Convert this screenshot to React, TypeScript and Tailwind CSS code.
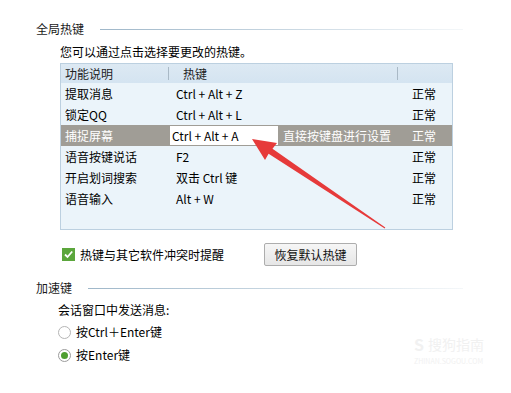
import React from "react";

const rows = [
  { name: "提取消息", key: "Ctrl + Alt + Z" },
  { name: "锁定QQ", key: "Ctrl + Alt + L" },
  { name: "捕捉屏幕", key: "Ctrl + Alt + A", selected: true },
  { name: "语音按键说话", key: "F2" },
  { name: "开启划词搜索", key: "双击 Ctrl 键" },
  { name: "语音输入", key: "Alt + W" },
];

export default function App() {
  return (
    <div
      className="relative w-[511px] h-[393px] bg-white overflow-hidden text-black"
      style={{ fontFamily: '"Noto Sans CJK SC", "Noto Sans", sans-serif' }}
    >
      <div className="pl-[36px] pt-[21px]">
        <div className="flex items-center h-4">
          <span className="text-[12px] leading-4 text-[#1a1a1a]">全局热键</span>
          <div className="flex-1 h-px ml-[16px] mr-[48px] bg-gradient-to-r from-[#9fb7c9] via-[#c7d6e1] to-[#f4f7f9]" />
        </div>
        <div className="pl-[24px] mt-[7px] text-[12px] leading-4">您可以通过点击选择要更改的热键。</div>
        <div className="ml-[24px] mt-[3px] w-[393px] h-[167px] border border-[#bcd0e0] bg-[#ebf4fa]">
          <div className="flex h-[19px] items-center bg-gradient-to-b from-[#dde9f3] to-[#d4e4f1] text-[12px] text-[#222]">
            <div className="w-[107px] pl-[4px] leading-4">功能说明</div>
            <div className="w-px h-[13px] bg-[#a9b9c6]" />
            <div className="w-[228px] pl-[14px] leading-4">热键</div>
            <div className="w-px h-[13px] bg-[#a9b9c6]" />
          </div>
          {rows.map((r) =>
            r.selected ? (
              <div key={r.name} className="flex h-[21px] items-center bg-[#a09d96] text-[12px] text-white">
                <div className="w-[109px] pl-[4px] leading-4">{r.name}</div>
                <div className="w-[108px] h-[19px] bg-white text-black pl-[2px] leading-[19px]">{r.key}</div>
                <div className="w-[134px] pl-[5px] leading-4">直接按键盘进行设置</div>
                <div className="leading-4">正常</div>
              </div>
            ) : (
              <div key={r.name} className="flex h-[21px] items-center text-[12px] text-black">
                <div className="w-[111px] pl-[4px] leading-4">{r.name}</div>
                <div className="w-[240px] pl-[4px] leading-4">{r.key}</div>
                <div className="leading-4">正常</div>
              </div>
            )
          )}
        </div>
        <div className="flex items-center ml-[26px] mt-[13px] h-[23px]">
          <div className="w-[13px] h-[13px] bg-[#5ba63c] flex items-center justify-center">
            <svg width="11" height="11" viewBox="0 0 11 11">
              <path d="M2 5.5 L4.5 8 L9.2 2.5" stroke="white" strokeWidth="1.8" fill="none" />
            </svg>
          </div>
          <span className="ml-[5px] text-[12px] leading-4">热键与其它软件冲突时提醒</span>
          <button className="ml-[40px] w-[93px] h-[23px] border border-[#adadad] rounded-[2px] bg-gradient-to-b from-[#f6f6f6] to-[#e6e6e6] text-[12px] leading-4 text-[#111]">
            恢复默认热键
          </button>
        </div>
        <div className="mt-[14px] flex items-center h-4">
          <span className="text-[12px] leading-4 text-[#1a1a1a]">加速键</span>
          <div className="flex-1 h-px ml-[16px] mr-[48px] bg-gradient-to-r from-[#9fb7c9] via-[#c7d6e1] to-[#f4f7f9]" />
        </div>
        <div className="pl-[22px] mt-[6px] text-[12px] leading-4">会话窗口中发送消息:</div>
        <div className="pl-[22px] mt-[5px] flex items-center h-[18px]">
          <div className="w-[13px] h-[13px] rounded-full border border-[#b5b5b5] bg-white" />
          <span className="ml-[5px] text-[12px] leading-4">按Ctrl＋Enter键</span>
        </div>
        <div className="pl-[22px] mt-[5px] flex items-center h-[18px]">
          <div className="w-[13px] h-[13px] rounded-full border border-[#9c9c9c] bg-white flex items-center justify-center">
            <div className="w-[7px] h-[7px] rounded-full bg-[#4f9e31]" />
          </div>
          <span className="ml-[5px] text-[12px] leading-4">按Enter键</span>
        </div>
      </div>

      <div className="absolute left-[414px] top-[336px] flex flex-col items-start text-[#f1f1f1]">
        <div className="flex items-center gap-[4px] text-[14px] leading-4">
          <span className="font-bold text-[16px]">S</span>
          <span>搜狗指南</span>
        </div>
        <div className="text-[7px] leading-3 mt-[3px]">ZHINAN.SOGOU.COM</div>
      </div>

      <svg className="absolute left-0 top-0 pointer-events-none" width="511" height="393" viewBox="0 0 511 393">
        <polygon
          points="252,139 277,143 272.5,148.7 385.3,227.6 384.7,228.4 268.6,153.7 265,160"
          fill="#e63a3a"
        />
      </svg>
    </div>
  );
}
